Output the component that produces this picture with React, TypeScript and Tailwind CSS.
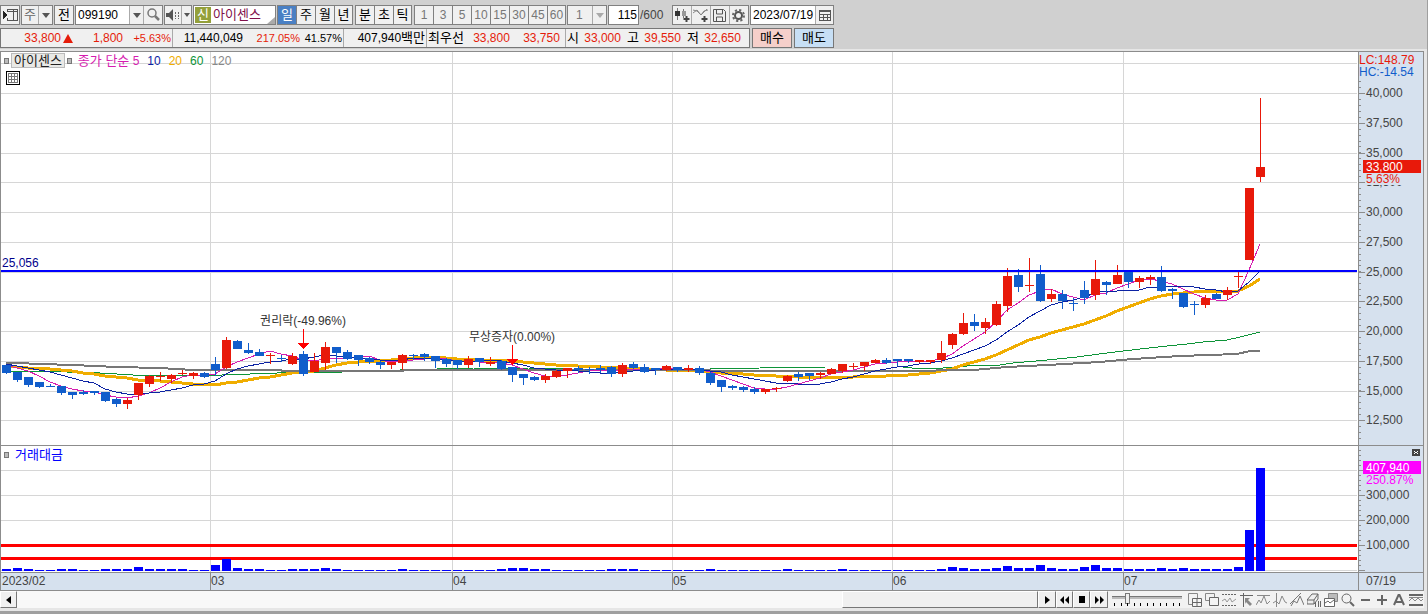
import type { ReactNode } from "react";

type Candle = [dir: "u" | "d", top: number, bottom: number, high: number, low: number];

const STEP = 11;

// one entry per session: direction, body top/bottom, wick high/low (pane y units)
const CANDLES: Candle[] = [
  ["d", 365, 373, 365, 374], ["d", 372, 380, 372, 382], ["d", 377, 385, 377, 387], ["d", 382, 387, 382, 388],
  ["d", 386, 387, 384, 387], ["d", 386, 393, 386, 395], ["d", 392, 395, 392, 399], ["d", 392, 394, 390, 395],
  ["d", 391, 393, 391, 395], ["d", 392, 401, 392, 402], ["d", 399, 404, 398, 407], ["u", 400, 404, 398, 409],
  ["u", 383, 395, 383, 400], ["u", 376, 384, 375, 387], ["u", 376, 377, 372, 381], ["u", 375, 379, 374, 383],
  ["u", 373, 374, 370, 375], ["u", 373, 376, 372, 379], ["d", 373, 377, 372, 378], ["d", 364, 370, 357, 376],
  ["u", 340, 368, 337, 369], ["d", 341, 349, 340, 349], ["d", 350, 353, 343, 354], ["d", 352, 356, 349, 356],
  ["u", 355, 356, 353, 364], ["d", 358, 359, 355, 362], ["u", 356, 364, 353, 365], ["d", 354, 374, 351, 376],
  ["u", 361, 372, 353, 372], ["u", 347, 363, 342, 370], ["d", 347, 353, 347, 363], ["d", 352, 359, 350, 360],
  ["d", 355, 360, 355, 366], ["d", 358, 362, 357, 364], ["d", 362, 365, 361, 369], ["u", 362, 365, 362, 369],
  ["u", 355, 363, 354, 370], ["d", 355, 356, 354, 360], ["d", 354, 357, 353, 361], ["d", 356, 361, 356, 368],
  ["d", 359, 364, 358, 367], ["d", 360, 365, 360, 369], ["u", 359, 365, 356, 368], ["d", 358, 362, 358, 367],
  ["u", 362, 364, 357, 366], ["d", 361, 369, 360, 370], ["d", 367, 375, 367, 382], ["d", 374, 378, 374, 385],
  ["d", 377, 380, 376, 381], ["u", 376, 380, 374, 383], ["u", 371, 377, 370, 378], ["u", 368, 371, 368, 378],
  ["d", 368, 370, 366, 373], ["d", 369, 370, 367, 374], ["d", 368, 370, 365, 373], ["d", 367, 374, 366, 377],
  ["u", 365, 374, 363, 377], ["d", 364, 368, 362, 369], ["d", 367, 372, 364, 373], ["d", 368, 370, 368, 375],
  ["u", 366, 370, 365, 371], ["d", 367, 370, 367, 372], ["u", 368, 370, 365, 372], ["d", 368, 373, 366, 375],
  ["d", 373, 383, 372, 385], ["d", 380, 387, 380, 392], ["d", 386, 388, 385, 390], ["d", 387, 390, 386, 392],
  ["d", 389, 392, 387, 394], ["u", 389, 392, 389, 394], ["u", 388, 389, 387, 392], ["u", 376, 381, 375, 382],
  ["d", 374, 377, 372, 381], ["d", 373, 376, 373, 380], ["u", 373, 375, 372, 379], ["u", 369, 374, 368, 374],
  ["u", 364, 371, 364, 373], ["u", 366, 367, 363, 369], ["u", 362, 366, 362, 371], ["u", 360, 363, 359, 363],
  ["d", 360, 363, 358, 364], ["d", 359, 361, 359, 366], ["d", 359, 361, 359, 363], ["u", 360, 362, 360, 363],
  ["u", 360, 362, 360, 364], ["u", 353, 360, 341, 363], ["u", 334, 345, 333, 349], ["u", 323, 334, 313, 335],
  ["d", 322, 326, 314, 331], ["u", 322, 328, 318, 334], ["u", 304, 325, 301, 326], ["u", 276, 306, 268, 312],
  ["d", 275, 287, 269, 292], ["u", 285, 286, 258, 292], ["d", 274, 301, 265, 302], ["u", 294, 299, 289, 302],
  ["d", 294, 301, 290, 309], ["d", 303, 304, 298, 311], ["d", 290, 298, 281, 304], ["u", 279, 295, 260, 300],
  ["d", 282, 285, 281, 295], ["u", 275, 284, 265, 284], ["d", 271, 282, 271, 288], ["u", 278, 282, 276, 288],
  ["u", 277, 279, 275, 285], ["d", 277, 291, 266, 292], ["d", 289, 291, 288, 299], ["d", 293, 307, 293, 308],
  ["d", 304, 305, 301, 315], ["u", 298, 305, 295, 308], ["d", 294, 299, 293, 299], ["u", 290, 295, 287, 300],
  ["u", 276, 277, 272, 288], ["u", 188, 260, 188, 260], ["u", 167, 177, 98, 182],
];

const VOLUMES = [
  2, 3, 2, 1, 1, 2, 2, 1, 1, 2, 2, 2, 4, 2, 2, 2, 2, 1, 1, 6, 12, 3, 2, 2, 1, 1, 2, 2, 2, 3, 2, 1, 1, 1, 1, 1, 2, 1,
  1, 1, 1, 1, 1, 1, 1, 2, 3, 3, 2, 2, 1, 1, 1, 1, 1, 2, 2, 2, 1, 1, 1, 1, 1, 1, 2, 1, 1, 1, 1, 1, 1, 2, 1, 1, 1, 1,
  2, 1, 1, 1, 1, 1, 1, 1, 1, 2, 4, 3, 2, 2, 3, 5, 3, 3, 6, 3, 2, 2, 4, 6, 3, 3, 2, 2, 2, 3, 2, 3, 2, 2, 2, 2, 4, 41, 103,
];

const cx = (i: number) => 6 + i * STEP;

const closes = CANDLES.map(([dir, top, bottom]) => (dir === "u" ? top : bottom));

// values before the first full window are carried over from earlier sessions
function average(n: number, carried: number[]) {
  return closes
    .map((_, i) => {
      const y =
        i < n - 1 ? carried[i] : closes.slice(i - n + 1, i + 1).reduce((a, b) => a + b, 0) / n;
      return `${cx(i)},${Math.round(y)}`;
    })
    .join(" ");
}

const MA5 = average(5, [365, 368, 371, 376]);
const MA10 = average(10, [364, 366, 368, 370, 372, 375, 378, 381, 383]);
const MA20 = average(20, [
  366, 367, 368, 368, 369, 370, 371, 373, 374, 376, 377, 378, 380, 380, 381, 382, 383, 384, 384,
]);
const MA60 =
  "6,371 34,371 66,372 100,373 133,375 222,375 250,374 305,372 342,372 400,370 474,368 528,368 600,370 710,369 760,368 826,367 903,367 912,368 943,368 967,366 1000,365 1013,363 1047,360 1077,357 1107,353 1140,349 1167,346 1187,344 1203,342 1227,340 1240,337 1260,332";
const MA120 =
  "6,363 18,363 40,364 73,365 95,366 116,367 160,368 193,370 281,370 282,371 403,371 404,370 710,370 712,371 900,371 973,370 1007,367 1047,365 1100,362 1133,359 1180,356 1237,354 1250,351 1260,351";

const GRID = [63, 93, 123, 153, 182, 212, 242, 272, 301, 331, 361, 391, 420];
const PRICES = [
  "", "40,000", "37,500", "35,000", "32,500", "30,000", "27,500", "25,000", "22,500", "20,000", "17,500", "15,000", "12,500",
];
const MONTHS = [
  { x: 210, label: "03" },
  { x: 452, label: "04" },
  { x: 672, label: "05" },
  { x: 892, label: "06" },
  { x: 1123, label: "07" },
];

const box = "flex h-5 items-center justify-center border border-[#808080] bg-[#f0f0f0]";

function Arrow({ pale = false }: { pale?: boolean }) {
  return (
    <svg width="8" height="5" className={pale ? "fill-[#aaa]" : "fill-[#555]"} aria-hidden>
      <path d="M0 0h8L4 5z" />
    </svg>
  );
}

function Segments({ items, active, muted }: { items: string[]; active?: string; muted?: boolean }) {
  return (
    <div className="flex border border-[#808080]">
      {items.map((t) => (
        <button
          key={t}
          className={
            "flex h-[18px] w-[19px] items-center justify-center border-r border-[#808080] last:w-[17px] last:border-r-0 " +
            (t === active ? "bg-[#4a80c4] text-white " : "bg-[#f0f0f0] ") +
            (muted ? "text-[12px] text-[#777]" : "text-[13px]")
          }
        >
          {t}
        </button>
      ))}
    </div>
  );
}

function Drop({ label, value, className, pale }: { label: string; value: string; className: string; pale?: boolean }) {
  return (
    <div className={"relative flex h-5 items-center border border-[#808080] bg-[#f0f0f0] " + className}>
      <select
        aria-label={label}
        defaultValue={value}
        className={"h-[18px] w-full appearance-none bg-transparent leading-4 outline-none " + (pale ? "pl-2 text-[12px] text-[#777]" : "pl-[2px] text-[13px] text-[#666]")}
      >
        <option>{value}</option>
      </select>
      <span className="pointer-events-none absolute inset-y-0 right-0 flex w-[14px] items-center justify-center border-l border-[#aaa]">
        <Arrow pale={pale} />
      </span>
    </div>
  );
}

function Toolbar() {
  return (
    <div className="flex items-center gap-px pt-[5px]">
      <button aria-label="화면 연결" className={box + " w-5"}>
        <svg width="15" height="14" shapeRendering="crispEdges" aria-hidden>
          <path d="M4.500 4V1.500h10v11h-10V10M10.500 2v10M5 3.500h9" fill="none" stroke="#555" />
          <path d="M0 3l5 4-5 4z" fill="#222" />
        </svg>
      </button>
      <Drop label="구분" value="주" className="w-8" />
      <button className={box + " w-5 text-[13px]"}>전</button>
      <div className="flex h-5 items-center border border-[#808080] bg-[#f0f0f0]">
        <input aria-label="종목코드" defaultValue="099190" className="h-[18px] w-[53px] bg-white pl-[2px] text-[12px] outline-none" />
        <button aria-label="종목 목록" className="flex h-[18px] w-[15px] items-center justify-center border-x border-[#aaa]">
          <Arrow />
        </button>
        <button aria-label="검색" className="flex h-[18px] w-[18px] items-center justify-center">
          <svg width="14" height="14" fill="none" stroke="#777" aria-hidden>
            <circle cx="6" cy="5" r="4" strokeWidth="1.500" />
            <path d="M9 8l4 4" strokeWidth="2.500" />
          </svg>
        </button>
      </div>
      <div className="flex h-5 border border-[#808080] bg-[#f0f0f0]">
        <button aria-label="소리" className="flex w-4 items-center justify-center">
          <svg width="14" height="12" aria-hidden>
            <path d="M0 4h3l4-4v12L3 8H0z" fill="#555" />
            <path d="M9.500 3v7M12.500 3v7" stroke="#666" strokeDasharray="2 1" />
          </svg>
        </button>
        <button aria-label="소리 설정" className="flex w-[10px] items-center justify-center border-l border-[#aaa]">
          <svg width="6" height="4" fill="#555" aria-hidden>
            <path d="M0 0h6L3 4z" />
          </svg>
        </button>
      </div>
      <button className="relative flex h-5 w-[83px] items-center border border-[#808080] bg-white px-px text-[13px] text-[#80104a]">
        <span className="flex h-4 w-4 items-center justify-center bg-[#94a03a] text-white">신</span>
        <span className="pl-[2px]">아이센스</span>
        <svg width="8" height="7" className="absolute right-0 bottom-0 fill-[#aaa]" aria-hidden>
          <path d="M8 0v7H0z" />
        </svg>
      </button>
      <div className="flex gap-[2px]">
        <Segments items={["일", "주", "월", "년"]} active="일" />
        <Segments items={["분", "초", "틱"]} />
        <Segments items={["1", "3", "5", "10", "15", "30", "45", "60"]} muted />
      </div>
      <Drop label="주기" value="1" className="w-10" pale />
      <div className="flex items-center text-[12px]">
        <input aria-label="표시 개수" defaultValue="115" className="h-5 w-[31px] border border-[#808080] bg-white pr-px text-right outline-none" />
        <span className="w-8 pl-px text-[#444]">/600</span>
      </div>
      <div className="flex h-5 border border-[#808080] bg-[#f0f0f0]">
        <ToolIcon label="봉 추가">
          <path d="M3.500 0v12M9.500 1v9" stroke="#777" />
          <path d="M1 3h5v5H1z" fill="#333" />
          <path d="M8 3h4v5H8z" fill="#999" />
          <path d="M12.500 8v6M9.500 11h6" stroke="#444" strokeWidth="2" />
        </ToolIcon>
        <ToolIcon label="지표 추가">
          <path d="M0 5l4-3 4 5 3-4 4-1M0 2l4 1 4 4 6-6" stroke="#888" fill="none" />
          <path d="M11.500 8v6M8.500 11h6" stroke="#444" strokeWidth="2" />
        </ToolIcon>
        <ToolIcon label="저장">
          <path d="M1.500 1.500h10l2 2v10h-12zM4.500 2v4h6V2M4.500 13V9h6v4" stroke="#555" fill="none" />
        </ToolIcon>
        <ToolIcon label="설정">
          <circle cx="7.500" cy="7.500" r="3.500" stroke="#555" strokeWidth="2" fill="none" />
          <circle cx="7.500" cy="7.500" r="5.500" stroke="#666" strokeWidth="2" strokeDasharray="2.200 2.120" fill="none" />
        </ToolIcon>
      </div>
      <div className="flex h-5 border border-[#808080] bg-[#f0f0f0]">
        <input aria-label="날짜" defaultValue="2023/07/19" className="w-16 bg-white pl-[2px] text-[12px] outline-none" />
        <button aria-label="달력" className="flex w-[18px] items-center justify-center border-l border-[#aaa]">
          <svg width="12" height="11" shapeRendering="crispEdges" fill="none" stroke="#555" aria-hidden>
            <path d="M0 1h12" strokeWidth="2" />
            <path d="M.5 1v9h11V1M1 4.500h10M1 7.500h10M4.500 4v6M8.500 4v6" />
          </svg>
        </button>
      </div>
    </div>
  );
}

function ToolIcon({ label, children }: { label: string; children: ReactNode }) {
  return (
    <button aria-label={label} className="flex w-[19px] items-center justify-center border-r border-[#aaa] last:w-[18px] last:border-r-0">
      <svg width="16" height="15" aria-hidden>
        {children}
      </svg>
    </button>
  );
}

function Quote() {
  const red = "text-right text-[#e51c0a]";
  return (
    <div className="flex gap-[2px] pt-[3px] text-[12px]">
      <div className="flex h-5 items-center border border-[#777] bg-[#f0f0f0] whitespace-nowrap">
        <div className="flex h-[18px] w-[172px] items-center border-r border-[#aaa]">
          <span className={red + " w-[60px]"}>33,800</span>
          <svg width="10" height="9" className="ml-[2px] fill-[#e51c0a]" aria-hidden>
            <path d="M5 0l5 9H0z" />
          </svg>
          <span className={red + " w-[50px]"}>1,800</span>
          <span className={red + " w-12 text-[11px]"}>+5.63%</span>
        </div>
        <div className="flex h-[18px] w-[171px] items-center border-r border-[#aaa]">
          <span className="w-[70px] text-right">11,440,049</span>
          <span className={red + " w-[57px] text-[11px]"}>217.05%</span>
          <span className="w-[42px] text-right text-[11px]">41.57%</span>
        </div>
        <div className="flex h-[18px] w-[83px] items-center justify-end border-r border-[#aaa] pr-px">
          407,940<span className="text-[13px]">백만</span>
        </div>
        <div className="flex h-[18px] w-[139px] items-center border-r border-[#aaa]">
          <span className="pl-px text-[13px]">최우선</span>
          <span className={red + " w-[46px]"}>33,800</span>
          <span className={red + " w-[50px]"}>33,750</span>
        </div>
        <div className="flex h-[18px] w-[183px] items-center">
          <span className="pl-px text-[13px]">시</span>
          <span className={red + " w-[42px]"}>33,000</span>
          <span className="pl-[6px] text-[13px]">고</span>
          <span className={red + " w-[42px]"}>39,550</span>
          <span className="pl-[6px] text-[13px]">저</span>
          <span className={red + " w-[42px]"}>32,650</span>
        </div>
      </div>
      <button className="h-5 w-10 border border-[#777] bg-[#f5cfca] text-[13px] leading-4">매수</button>
      <button className="h-5 w-10 border border-[#777] bg-[#c7dff5] text-[13px] leading-4">매도</button>
    </div>
  );
}

function Marker() {
  return <span className="h-[6px] w-[5px] border border-[#777] bg-[#bbb]" />;
}

function MonthLines() {
  return (
    <>
      {MONTHS.map((m) => (
        <rect key={m.x} x={m.x} y="0" width="1" height="600" fill="#d6d6d6" />
      ))}
    </>
  );
}

function Note({ x, y, text }: { x: number; y: number; text: string }) {
  return (
    <g>
      <text x={x} y={y} textAnchor="middle" fontSize="12" fill="#333">
        {text}
      </text>
      <rect x={x} y={y + 4} width="1" height="14" fill="#f00" />
      <path d={`M${x - 5} ${y + 18}h11l-5.500 6z`} fill="#f00" />
    </g>
  );
}

function PricePane() {
  return (
    <div className="relative flex">
      <svg className="block h-[393px] min-w-0 flex-1 bg-white" shapeRendering="crispEdges" role="img" aria-label="아이센스 일봉">
        <g transform="translate(-1 -52)">
          {GRID.map((y) => (
            <rect key={y} x="0" y={y} width="100%" height="1" fill="#d6d6d6" />
          ))}
          <MonthLines />
          <g fill="none">
            <polyline points={MA60} stroke="#0d9438" />
            <polyline points={MA20} stroke="#f0ad00" strokeWidth="3" />
            <polyline points={MA120} stroke="#777" strokeWidth="2" />
            <polyline points={MA5} stroke="#d61cb0" />
            <polyline points={MA10} stroke="#0c23a3" />
          </g>
          {CANDLES.map(([dir, top, bottom, high, low], i) => (
            <g key={i} fill={dir === "u" ? "#e8190a" : "#115dcb"}>
              <rect x={cx(i)} y={high} width="1" height={low - high} />
              <rect x={cx(i) - 4} y={top} width="9" height={bottom - top} />
            </g>
          ))}
          <rect x="0" y="270" width="100%" height="2" fill="#00f" />
          <text x="2" y="267" fontSize="12" fill="#00008c">
            25,056
          </text>
          <Note x={303} y={325} text="권리락(-49.96%)" />
          <Note x={512} y={341} text="무상증자(0.00%)" />
        </g>
      </svg>
      <svg className="block h-[393px] w-[65px] border-l border-[#8c8c8c] bg-[#d6e1ee]" shapeRendering="crispEdges" role="img" aria-label="가격 축">
        <g transform="translate(-1359 -52)" fontSize="12">
          {Array.from({ length: 61 }, (_, i) => (
            <rect key={i} x="1359" y={Math.round(81 + i * 5.95)} width="2" height="1" fill="#8c8c8c" />
          ))}
          {PRICES.map((p, i) =>
            p ? (
              <g key={p}>
                <rect x="1359" y={GRID[i]} width="6" height="1" fill="#8c8c8c" />
                <text x="1366" y={GRID[i] + 4} fill="#444">
                  {p}
                </text>
              </g>
            ) : null,
          )}
          <rect x="1365" y="173" width="56" height="12" fill="#d6e1ee" />
          <rect x="1363" y="160" width="58" height="13" fill="#e8190a" />
          <text x="1366" y="171" fill="#fff">33,800</text>
          <text x="1366" y="183" fill="#e8190a">5.63%</text>
          <text x="1359" y="64" fill="#e8190a">LC:148.79</text>
          <text x="1359" y="76" fill="#115dcb">HC:-14.54</text>
        </g>
      </svg>
      <div className="absolute top-px left-[3px] flex h-[15px] items-center gap-[2px] text-[12px]">
        <Marker />
        <span className="flex h-[15px] items-center border border-[#bbb] bg-[#e9e9e6] px-[2px] text-[13px] text-[#222]">아이센스</span>
        <Marker />
        <span className="ml-1 flex items-center gap-2">
          <span className="text-[#d61cb0]">
            <span className="text-[13px]">종가 단순</span> 5
          </span>
          <span className="text-[#0c23a3]">10</span>
          <span className="text-[#f0ad00]">20</span>
          <span className="text-[#0d9438]">60</span>
          <span className="text-[#888]">120</span>
        </span>
      </div>
      <button aria-label="표 보기" className="absolute top-[19px] left-[5px]">
        <svg width="14" height="14" shapeRendering="crispEdges" fill="none" aria-hidden>
          <path d="M.5.5h13v13H.5z" stroke="#000" fill="#fff" />
          <path d="M2.500 2.500h9v9h-9zM2 5.500h10M2 8.500h10M5.500 2v10M8.500 2v10" stroke="#777" />
        </svg>
      </button>
    </div>
  );
}

function VolumePane() {
  return (
    <div className="relative flex border-t border-[#8c8c8c]">
      <svg className="block h-[126px] min-w-0 flex-1 bg-white" shapeRendering="crispEdges" role="img" aria-label="거래대금">
        <g transform="translate(-1 -446)">
          {[470, 495, 520, 570].map((y) => (
            <rect key={y} x="0" y={y} width="100%" height="1" fill="#d6d6d6" />
          ))}
          <MonthLines />
          <rect x="0" y="544" width="100%" height="3" fill="#f00" />
          <rect x="0" y="557" width="100%" height="3" fill="#f00" />
          {VOLUMES.map((v, i) => (
            <rect key={i} x={cx(i) - 4} y={571 - v} width="9" height={v} fill="#00f" />
          ))}
        </g>
      </svg>
      <svg className="block h-[126px] w-[65px] border-l border-[#8c8c8c] bg-[#d6e1ee]" shapeRendering="crispEdges" role="img" aria-label="거래대금 축">
        <g transform="translate(-1359 -446)" fontSize="12">
          {Array.from({ length: 25 }, (_, i) => (
            <rect key={i} x="1359" y={450 + i * 5} width={i % 5 === 4 ? 6 : 2} height="1" fill="#8c8c8c" />
          ))}
          <rect x="1363" y="461" width="58" height="13" fill="#f0f" />
          <text x="1366" y="472" fill="#fff">407,940</text>
          <text x="1366" y="484" fill="#f0f">250.87%</text>
          <text x="1366" y="499" fill="#444">300,000</text>
          <text x="1366" y="524" fill="#444">200,000</text>
          <text x="1366" y="549" fill="#444">100,000</text>
        </g>
      </svg>
      <div className="absolute top-px left-[3px] flex items-center gap-[6px] text-[13px] leading-[15px] text-[#00f]">
        <Marker />
        <span>거래대금</span>
      </div>
      <button aria-label="닫기" className="absolute top-[3px] right-[3px]">
        <svg width="8" height="7" shapeRendering="crispEdges" aria-hidden>
          <path d="M0 0h8v7H0z" fill="#444" />
          <path d="M2 2h1v1H2zM5 2h1v1H5zM3 3h2v1H3zM2 4h1v1H2zM5 4h1v1H5z" fill="#fff" />
        </svg>
      </button>
    </div>
  );
}

function DateAxis() {
  return (
    <div className="flex border-y border-[#8c8c8c] bg-[#d6e1ee]">
      <svg className="block h-[17px] min-w-0 flex-1" role="img" aria-label="날짜 축" fontSize="12" fill="#444">
        <text x="1" y="12">2023/02</text>
        {MONTHS.map((m) => (
          <g key={m.x}>
            <rect x={m.x - 1} y="0" width="1" height="17" fill="#8c8c8c" />
            <text x={m.x} y="12">
              {m.label}
            </text>
          </g>
        ))}
      </svg>
      <div className="w-[65px] border-l border-[#8c8c8c] pl-[7px] text-[12px] leading-4 text-[#444]">07/19</div>
    </div>
  );
}

const raised = "flex h-[17px] items-center justify-center border border-t-white border-l-white border-r-[#777] border-b-[#777] bg-[#f0f0f0]";

const FOOT_ICONS: { label: string; art: ReactNode }[] = [
  { label: "차트 추가", art: <><path d="M.5.5h9v11h-9z" stroke="#888" /><path d="M4.500 5.500h9v8h-9zM4 9.500h9M9 5v9" fill="#f4f4f4" /></> },
  { label: "창 겹치기", art: <><path d="M.5.5h9v7h-9z" stroke="#888" /><path d="M4.500 4.500h9v8h-9z" fill="#f4f4f4" /></> },
  { label: "영역", art: <><path d="M0 1.500h14M0 12.500h14" strokeDasharray="2 1" /><path d="M0 8l3-2 2 3 3-4 2 4 4-3" stroke="#999" /></> },
  { label: "추세", art: <><path d="M1 2.500h13M4.500 0v14" /><path d="M6 5h5L9 7l4 4-2 2-4-4-1 2z" fill="#888" stroke="none" /></> },
  { label: "수평선", art: <path d="M1 2.500h13M0 12l3-5 2 3 3-7 3 8 3-3" stroke="#888" /> },
  { label: "수직선", art: <path d="M3.500 0v14M0 10l3-2 3 3 3-8 3 6 2 1" stroke="#888" /> },
  { label: "추세선", art: <path d="M0 11L11 0M1 13l3-5 3 2 3-7 4 9" stroke="#777" /> },
  { label: "모두 지우기", art: <><path d="M0 7l5-6h6L7 7zM0 7v4h7V7M7 11l4-5V1" fill="#eee" /><path d="M8.500 9v5M11.500 8v6M13.500 8v6" strokeWidth="1" /></> },
  { label: "차트 비교", art: <><path d="M4.500.5h9v8h-9z" fill="#bbb" stroke="#888" /><path d="M.5 5.500h10v8H.5z" fill="#fff" /><path d="M1 10l3-2 2 2 4-3" /></> },
  { label: "돋보기", art: <><circle cx="5.500" cy="5.500" r="4.500" /><path d="M9 9l4 4" strokeWidth="2" /></> },
  { label: "축소", art: <path d="M3 7h9" strokeWidth="2" /> },
  { label: "확대", art: <path d="M2 7h10M7 2v10" strokeWidth="2" /> },
  { label: "글자", art: <path d="M2 12L6.500 2h1L12 12M4 9h6" strokeWidth="2" /> },
  { label: "배치", art: <><path d="M0 2h14M0 12h14" strokeWidth="2" /><path d="M0 8l3-3 3 3 3-3 3 3 2-2M0 4.500h14" stroke="#888" /></> },
];

function Footer() {
  return (
    <div className="flex h-[17px] items-center bg-[#f2f2f2] pr-px">
      <button aria-label="왼쪽으로" className={raised + " w-[17px]"}>
        <svg width="5" height="8" aria-hidden><path d="M5 0v8L0 4z" /></svg>
      </button>
      <div className="flex h-[17px] flex-1 justify-end bg-[#f8f8f8]">
        <div className={raised + " w-[196px]"} />
      </div>
      <button aria-label="오른쪽으로" className={raised + " w-[18px]"}>
        <svg width="5" height="8" aria-hidden><path d="M0 0v8l5-4z" /></svg>
      </button>
      <button aria-label="뒤로 감기" className={raised + " w-[17px]"}>
        <svg width="9" height="8" aria-hidden><path d="M4 0v8L0 4zM9 0v8L5 4z" /></svg>
      </button>
      <button aria-label="정지" className={raised + " w-[17px]"}>
        <svg width="6" height="7" aria-hidden><path d="M0 0h6v7H0z" /></svg>
      </button>
      <button aria-label="앞으로 감기" className={raised + " w-[18px]"}>
        <svg width="9" height="8" aria-hidden><path d="M0 0v8l4-4zM5 0v8l4-4z" /></svg>
      </button>
      <div className="ml-1 w-[70px]">
        <input
          type="range"
          aria-label="재생 속도"
          defaultValue="20"
          className="block h-[11px] w-full appearance-none bg-transparent [&::-webkit-slider-runnable-track]:h-[3px] [&::-webkit-slider-runnable-track]:border-t [&::-webkit-slider-runnable-track]:border-[#777] [&::-webkit-slider-runnable-track]:bg-[#bbb] [&::-webkit-slider-thumb]:-mt-1 [&::-webkit-slider-thumb]:h-[11px] [&::-webkit-slider-thumb]:w-[5px] [&::-webkit-slider-thumb]:appearance-none [&::-webkit-slider-thumb]:border [&::-webkit-slider-thumb]:border-[#777] [&::-webkit-slider-thumb]:bg-[#eee]"
        />
        <svg width="70" height="4" className="block" shapeRendering="crispEdges" aria-hidden>
          <path d="M2 1.500h68" stroke="#000" strokeWidth="3" strokeDasharray="1 5.500" />
        </svg>
      </div>
      <div className="ml-[6px] flex gap-[3px]">
        {FOOT_ICONS.map(({ label, art }) => (
          <button key={label} aria-label={label} className="flex h-[17px] w-[14px] items-center justify-center">
            <svg width="14" height="14" fill="none" stroke="#666" aria-hidden>
              {art}
            </svg>
          </button>
        ))}
      </div>
    </div>
  );
}

export default function App() {
  return (
    <div className="min-h-screen border-r border-[#9f9f9f] bg-[#9f9f9f] font-['Liberation_Sans','Noto_Sans_CJK_KR',sans-serif] text-black">
      <div className="bg-[#d0d0d0] pb-px">
        <Toolbar />
        <Quote />
      </div>
      <div className="bg-[#e6e6e6] pt-[2px] pr-[3px] pb-[3px]">
        <div className="border-t border-r border-l border-[#8c8c8c]">
          <PricePane />
          <VolumePane />
          <DateAxis />
        </div>
        <Footer />
      </div>
    </div>
  );
}
